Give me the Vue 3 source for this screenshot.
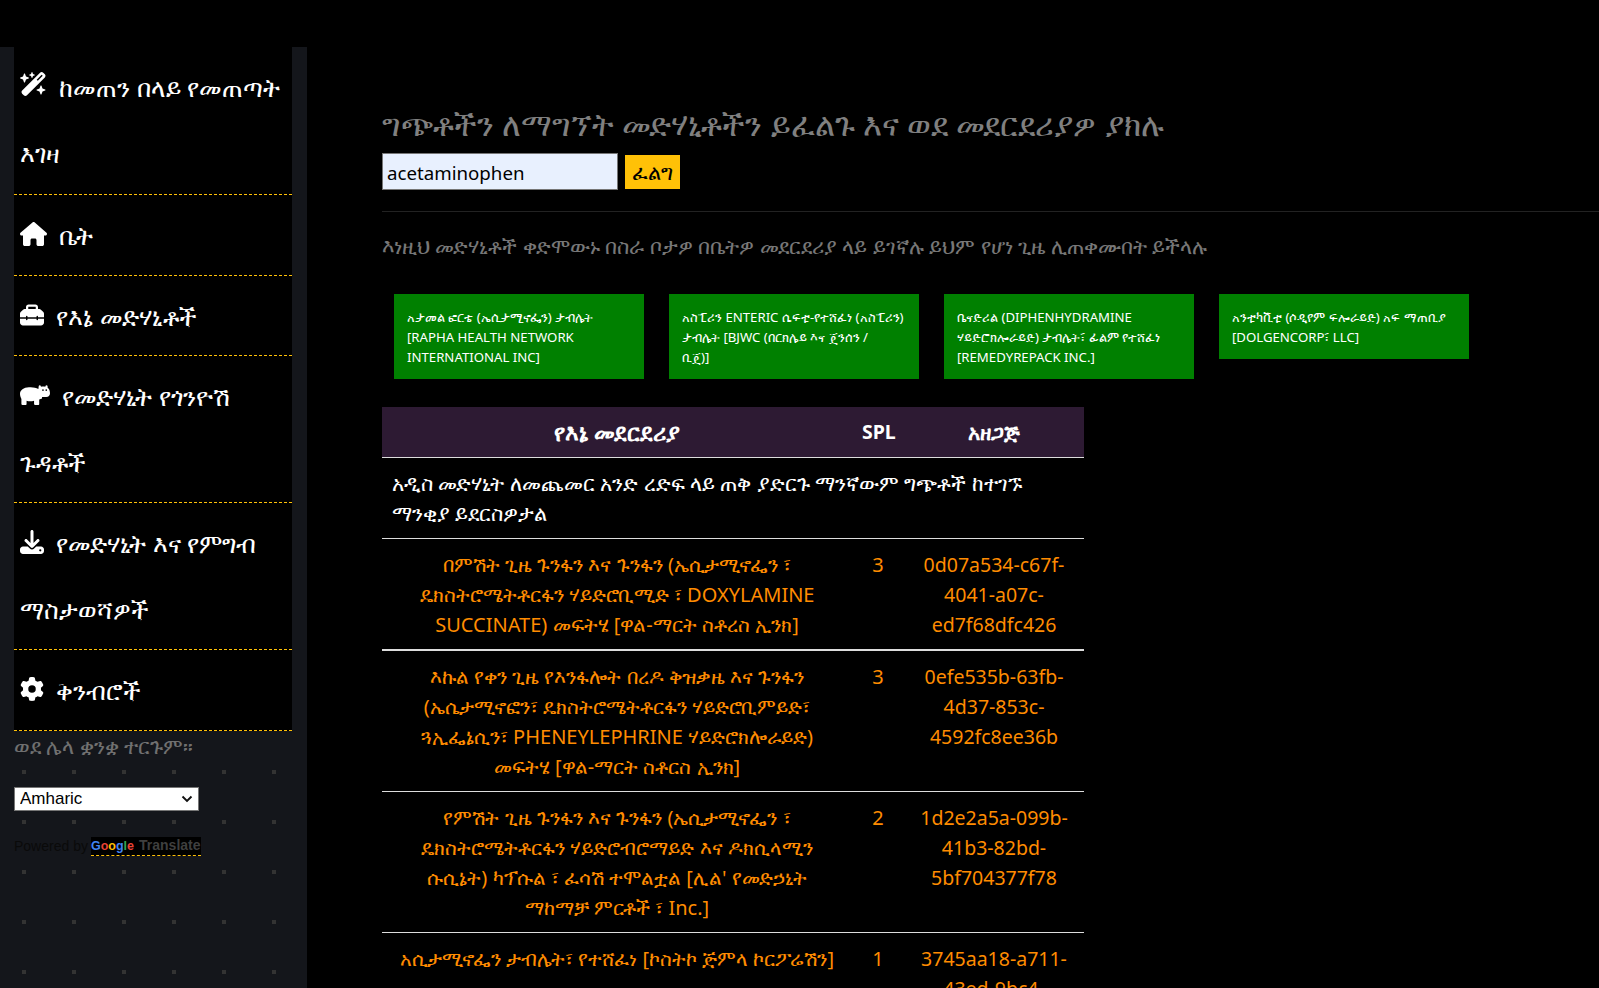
<template>
  <div class="page">
    <div class="top"></div>
    <div class="layout">
      <aside class="side">
        <nav class="nav">
          <a v-for="item in nav" :key="item.label" class="nav__item">
            <svg class="nav__icon" :style="{ width: item.w + 'px', height: item.h + 'px', verticalAlign: (item.lift || -1) + 'px' }" :viewBox="item.box" fill="#fff">
              <path fill-rule="evenodd" :d="item.d" />
            </svg>{{ item.label }}
          </a>
        </nav>
        <div class="lang">ወደ ሌላ ቋንቋ ተርጉም።</div>
        <select class="lang__select">
          <option>Amharic</option>
        </select>
        <div class="powered">
          Powered by
          <span class="gt"><span class="gt__logo"><span class="g1">G</span><span class="g2">o</span><span class="g3">o</span><span class="g1">g</span><span class="g4">l</span><span class="g2">e</span></span><span class="gt__word">Translate</span></span>
        </div>
      </aside>
      <main class="main">
        <h2 class="main__title">ግጭቶችን ለማግኘት መድሃኒቶችን ይፈልጉ እና ወደ መደርደሪያዎ ያክሉ</h2>
        <div class="search">
          <input class="search__input" value="acetaminophen" />
          <button class="search__btn">ፈልግ</button>
        </div>
        <hr class="rule" />
        <p class="lead">እነዚህ መድሃኒቶች ቀድሞውኑ በስራ ቦታዎ በቤትዎ መደርደሪያ ላይ ይገኛሉ ይህም የሆነ ጊዜ ሊጠቀሙበት ይችላሉ</p>
        <div class="cards">
          <div v-for="c in cards" :key="c" class="card">{{ c }}</div>
        </div>
        <table class="shelf">
          <colgroup>
            <col style="width: 470px" />
            <col style="width: 52px" />
            <col style="width: 180px" />
          </colgroup>
          <thead>
            <tr>
              <th class="shelf__name">የእኔ መደርደሪያ</th>
              <th class="shelf__spl">SPL</th>
              <th class="shelf__maker">አዘጋጅ</th>
            </tr>
          </thead>
          <tbody>
            <tr>
              <td class="shelf__note" colspan="3">አዲስ መድሃኒት ለመጨመር አንድ ረድፍ ላይ ጠቅ ያድርጉ ማንኛውም ግጭቶች ከተገኙ ማንቂያ ይደርስዎታል</td>
            </tr>
            <tr v-for="r in rows" :key="r.id">
              <td class="shelf__drug">{{ r.name }}</td>
              <td>{{ r.spl }}</td>
              <td class="shelf__id">{{ r.id }}</td>
            </tr>
          </tbody>
        </table>
      </main>
    </div>
  </div>
</template>

<script setup>
const nav = [
  {
    label: "ከመጠን በላይ የመጠጣት እገዛ",
    w: 27, h: 24, box: "0 0 576 512", lift: 1,
    d: "M234.7 42.7L197 56.8c-3 1.1-5 4-5 7.2s2 6.1 5 7.2l37.7 14.1L248.8 123c1.1 3 4 5 7.2 5s6.1-2 7.2-5l14.1-37.7L315 71.2c3-1.1 5-4 5-7.2s-2-6.1-5-7.2L277.3 42.7 263.2 5c-1.1-3-4-5-7.2-5s-6.1 2-7.2 5L234.7 42.7zM46.1 395.4c-18.7 18.7-18.7 49.1 0 67.9l34.6 34.6c18.7 18.7 49.1 18.7 67.9 0L529.9 116.5c18.7-18.7 18.7-49.1 0-67.9L495.3 14.1c-18.7-18.7-49.1-18.7-67.9 0L46.1 395.4zM484.6 82.6l-105 105-23.3-23.3 105-105 23.3 23.3zM7.5 117.2C3 118.9 0 123.2 0 128s3 9.1 7.5 10.8L64 160l21.2 56.5c1.7 4.5 6 7.5 10.8 7.5s9.1-3 10.8-7.5L128 160l56.5-21.2c4.5-1.7 7.5-6 7.5-10.8s-3-9.1-7.5-10.8L128 96 106.8 39.5C105.1 35 100.8 32 96 32s-9.1 3-10.8 7.5L64 96 7.5 117.2zm352 256c-4.5 1.7-7.5 6-7.5 10.8s3 9.1 7.5 10.8L416 416l21.2 56.5c1.7 4.5 6 7.5 10.8 7.5s9.1-3 10.8-7.5L480 416l56.5-21.2c4.5-1.7 7.5-6 7.5-10.8s-3-9.1-7.5-10.8L480 352l-21.2-56.5c-1.7-4.5-6-7.5-10.8-7.5s-9.1 3-10.8 7.5L416 352l-56.5 21.2z",
  },
  {
    label: "ቤት",
    w: 27, h: 24, box: "0 0 576 512",
    d: "M575.8 255.5c0 18-15 32.1-32 32.1h-32l.7 160.2c0 2.7-.2 5.4-.5 8.1V472c0 22.1-17.9 40-40 40H456c-1.1 0-2.2 0-3.3-.1c-1.4 .1-2.8 .1-4.2 .1H416 392c-22.1 0-40-17.9-40-40V448 384c0-17.7-14.3-32-32-32H256c-17.7 0-32 14.3-32 32v64 24c0 22.1-17.9 40-40 40H160 128.1c-1.5 0-3-.1-4.5-.2c-1.2 .1-2.4 .2-3.6 .2H104c-22.1 0-40-17.9-40-40V360c0-.9 0-1.9 .1-2.8V287.6H32c-18 0-32-14-32-32.1c0-9 3-17 10-24L266.4 8c7-7 15-8 22-8s15 2 21 7L564.8 231.5c8 7 12 15 11 24z",
  },
  {
    label: "የእኔ መድሃኒቶች",
    w: 24, h: 24, box: "0 0 512 512",
    d: "M176 88v40h160V88c0-4.4-3.6-8-8-8H184c-4.4 0-8 3.6-8 8zm-48 40V88c0-30.9 25.1-56 56-56h144c30.9 0 56 25.1 56 56v40h28.1c12.7 0 24.9 5.1 33.9 14.1l51.9 51.9c9 9 14.1 21.2 14.1 33.9V304H384v-16c0-8.8-7.2-16-16-16s-16 7.2-16 16v16H160v-16c0-8.8-7.2-16-16-16s-16 7.2-16 16v16H0v-76.1c0-12.7 5.1-24.9 14.1-33.9l51.9-51.9c9-9 21.2-14.1 33.9-14.1H128zM0 416v-80h128v16c0 8.8 7.2 16 16 16s16-7.2 16-16v-16h192v16c0 8.8 7.2 16 16 16s16-7.2 16-16v-16h128v80c0 35.3-28.7 64-64 64H64c-35.3 0-64-28.7-64-64z",
  },
  {
    label: "የመድሃኒት የጎንዮሽ ጉዳቶች",
    w: 30, h: 24, box: "0 0 640 512",
    d: "M190 90C280 84 340 100 392 128L400 64C402 40 440 40 444 64L446 78C480 70 510 70 540 80L544 62C548 40 584 40 588 64L590 100C625 125 640 170 640 220C640 270 610 300 560 300L470 300L470 330C450 340 430 344 410 350L410 450C410 465 400 470 390 470L320 470C310 470 300 462 300 450L300 380C240 395 190 395 140 380L140 450C140 465 130 470 120 470L50 470C40 470 30 462 30 450L30 340C10 300 0 270 0 230C0 150 80 96 190 90ZM472 150a18 18 0 1 0 36 0a18 18 0 1 0-36 0zM542 150a18 18 0 1 0 36 0a18 18 0 1 0-36 0z",
  },
  {
    label: "የመድሃኒት እና የምግብ ማስታወሻዎች",
    w: 24, h: 24, box: "0 0 512 512",
    d: "M288 32c0-17.7-14.3-32-32-32s-32 14.3-32 32V274.7l-73.4-73.4c-12.5-12.5-32.8-12.5-45.3 0s-12.5 32.8 0 45.3l128 128c12.5 12.5 32.8 12.5 45.3 0l128-128c12.5-12.5 12.5-32.8 0-45.3s-32.8-12.5-45.3 0L288 274.7V32zM64 352c-35.3 0-64 28.7-64 64v32c0 35.3 28.7 64 64 64H448c35.3 0 64-28.7 64-64V416c0-35.3-28.7-64-64-64H346.5l-45.3 45.3c-25 25-65.5 25-90.5 0L165.5 352H64zm368 56a24 24 0 1 1 0 48 24 24 0 1 1 0-48z",
  },
  {
    label: "ቅንብሮች",
    w: 24, h: 24, box: "0 0 512 512",
    d: "M495.9 166.6c3.2 8.7 .5 18.4-6.4 24.6l-43.3 39.4c1.1 8.3 1.7 16.8 1.7 25.4s-.6 17.1-1.7 25.4l43.3 39.4c6.9 6.2 9.6 15.9 6.4 24.6c-4.4 11.9-9.7 23.3-15.8 34.3l-4.7 8.1c-6.6 11-14 21.4-22.1 31.2c-5.9 7.2-15.7 9.6-24.5 6.8l-55.7-17.7c-13.4 10.3-28.2 18.9-44 25.4l-12.5 57.1c-2 9.1-9 16.3-18.2 17.8c-13.8 2.3-28 3.5-42.5 3.5s-28.7-1.2-42.5-3.5c-9.2-1.5-16.2-8.7-18.2-17.8l-12.5-57.1c-15.8-6.5-30.6-15.1-44-25.4L83.1 425.9c-8.8 2.8-18.6 .3-24.5-6.8c-8.1-9.8-15.5-20.2-22.1-31.2l-4.7-8.1c-6.1-11-11.4-22.4-15.8-34.3c-3.2-8.7-.5-18.4 6.4-24.6l43.3-39.4C64.6 273.1 64 264.6 64 256s.6-17.1 1.7-25.4L22.4 191.2c-6.9-6.2-9.6-15.9-6.4-24.6c4.4-11.9 9.7-23.3 15.8-34.3l4.7-8.1c6.6-11 14-21.4 22.1-31.2c5.9-7.2 15.7-9.6 24.5-6.8l55.7 17.7c13.4-10.3 28.2-18.9 44-25.4l12.5-57.1c2-9.1 9-16.3 18.2-17.8C227.3 1.2 241.5 0 256 0s28.7 1.2 42.5 3.5c9.2 1.5 16.2 8.7 18.2 17.8l12.5 57.1c15.8 6.5 30.6 15.1 44 25.4l55.7-17.7c8.8-2.8 18.6-.3 24.5 6.8c8.1 9.8 15.5 20.2 22.1 31.2l4.7 8.1c6.1 11 11.4 22.4 15.8 34.3zM256 336a80 80 0 1 0 0-160 80 80 0 1 0 0 160z",
  },
];

const cards = [
  "አታመል ፎርቴ (ኤሲታሚኖፌን) ታብሌት [RAPHA HEALTH NETWORK INTERNATIONAL INC]",
  "አስፒሪን ENTERIC ሴፍቲ-የተሸፈነ (አስፒሪን) ታብሌት [BJWC (በርክሌይ እና ጄንሰን /\nቢጄ)]",
  "ቤናድሪል (DIPHENHYDRAMINE ሃይድሮክሎራይድ) ታብሌት፣ ፊልም የተሸፈነ [REMEDYREPACK INC.]",
  "አንቲካቪቲ (ሶዲየም ፍሎራይድ) አፍ ማጠቢያ [DOLGENCORP፣ LLC]",
];

const rows = [
  {
    name: "በምሽት ጊዜ ጉንፋን እና ጉንፋን (ኤሲታሚኖፌን ፣ ዴክስትሮሜትቶርፋን ሃይድሮቢሚድ ፣ DOXYLAMINE SUCCINATE) መፍትሄ [ዋል-ማርት ስቶረስ ኢንክ]",
    spl: 3,
    id: "0d07a534-c67f-4041-a07c-ed7f68dfc426",
  },
  {
    name: "እኩል የቀን ጊዜ የእንፋሎት በረዶ ቅዝቃዜ እና ጉንፋን (ኤሴታሚኖፎን፣ ዴክስትሮሜትቶርፋን ሃይድሮቢምይድ፣ ጓኢፌኔሲን፣ PHENEYLEPHRINE ሃይድሮክሎራይድ) መፍትሄ [ዋል-ማርት ስቶርስ ኢንክ]",
    spl: 3,
    id: "0efe535b-63fb-4d37-853c-4592fc8ee36b",
  },
  {
    name: "የምሽት ጊዜ ጉንፋን እና ጉንፋን (ኤሲታሚኖፌን ፣ ዴክስትሮሜትቶርፋን ሃይድሮብሮማይድ እና ዶክሲላሚን ሱሲኔት) ካፕሱል ፣ ፈሳሽ ተሞልቷል [ሊል' የመድኃኒት ማከማቻ ምርቶች ፣ Inc.]",
    spl: 2,
    id: "1d2e2a5a-099b-41b3-82bd-5bf704377f78",
  },
  {
    name: "አሲታሚኖፌን ታብሌት፣ የተሸፈነ [ኮስትኮ ጅምላ ኮርፖሬሽን]",
    spl: 1,
    id: "3745aa18-a711-43ed-9bc4-7a1e0c52d6f3",
  },
];
</script>

<style>
html,
body {
  background: #000;
  height: 100%;
  overflow: hidden;
}
</style>

<style scoped>
.page {
  background: #000;
  color: #fff;
  font-family: "Noto Sans", "Open Sans", "DejaVu Sans", sans-serif;
  height: 100vh;
  overflow: hidden;
}

.top {
  height: 47px;
}

.layout {
  display: flex;
  height: 941px;
}

.side {
  background-color: #14161b;
  background-image: conic-gradient(from 270deg at 4px 4px, #333 25%, transparent 0);
  background-position: 22px 23px;
  background-size: 50px 50px;
  box-sizing: border-box;
  flex: 0 0 307px;
  padding: 0 15px 0 14px;
}

.nav {
  background: #000;
}

.nav__item {
  border-bottom: 1px dashed #ffc107;
  display: block;
  font-size: 25px;
  line-height: 66px;
  padding: 7px 6px 6.83px;
}

.nav__item:first-child {
  padding-bottom: 7.83px;
}

.nav__icon {
  margin-right: 12px;
}

.lang {
  color: #707070;
  font-size: 21px;
  line-height: 24px;
  margin-top: 3px;
}

.lang__select {
  appearance: none;
  background-color: #fff;
  background-image: url("data:image/svg+xml,%3Csvg xmlns='http://www.w3.org/2000/svg' viewBox='0 0 12 8'%3E%3Cpath d='M1.5 1.5 6 6l4.5-4.5' fill='none' stroke='%23111' stroke-width='1.9'/%3E%3C/svg%3E");
  background-position: right 5px center;
  background-repeat: no-repeat;
  background-size: 12px 8px;
  border: 1px solid #767676;
  border-radius: 0;
  box-sizing: border-box;
  color: #000;
  display: block;
  font-family: "Liberation Sans", sans-serif;
  font-size: 17px;
  height: 24px;
  margin-top: 29px;
  padding: 0 0 0 5px;
  width: 185px;
}

.powered {
  align-items: center;
  color: #0a0a0a;
  display: flex;
  font-family: "Liberation Sans", sans-serif;
  font-size: 14px;
  gap: 3px;
  margin-top: 26px;
}

.gt {
  background: #000;
  border-bottom: 1px dashed #ffc107;
  font-weight: 700;
  line-height: 17px;
}

.gt__logo {
  font-size: 12.5px;
}

.g1 { color: #4285f4; }
.g2 { color: #ea4335; }
.g3 { color: #fbbc05; }
.g4 { color: #34a853; }

.gt__word {
  color: #3f3f3f;
  font-size: 14px;
  margin-left: 5px;
}

.main {
  flex: 1;
  min-width: 0;
  padding-left: 75px;
}

.main__title {
  color: #808080;
  font-size: 31.7px;
  font-weight: 400;
  line-height: 36px;
  margin: 59px 0 0;
}

.search {
  align-items: center;
  display: flex;
  gap: 7px;
  margin-top: 11px;
}

.search__input {
  background: #e8f0fe;
  border: 1px solid #767676;
  box-sizing: border-box;
  color: #000;
  font-family: inherit;
  font-size: 18.7px;
  height: 37px;
  padding: 2px 4px 0;
  width: 236px;
}

.search__btn {
  background: #ffc107;
  border: 0;
  color: #000;
  font-family: inherit;
  font-size: 21px;
  height: 34px;
  padding: 0;
  width: 55px;
}

.rule {
  border: 0;
  border-top: 1px solid #222;
  margin: 21px 0 0;
}

.lead {
  color: #777;
  font-size: 21.1px;
  line-height: 28px;
  margin: 20px 0 0;
}

.cards {
  align-items: flex-start;
  display: flex;
  gap: 25px;
  margin-top: 34px;
  padding-left: 12px;
}

.card {
  background: #008000;
  box-sizing: border-box;
  flex: 0 0 250px;
  font-size: 13.2px;
  line-height: 20px;
  padding: 12.5px 8px 12.5px 13px;
  white-space: pre-line;
}

.shelf {
  border-collapse: collapse;
  font-size: 20px;
  line-height: 30px;
  margin-top: 28px;
  table-layout: fixed;
  width: 702px;
}

.shelf th {
  background: #2d1a33;
  border-bottom: 1px solid #ddd;
  font-weight: 700;
  height: 50px;
  padding: 0 10px;
  text-align: center;
}

.shelf th.shelf__name {
  font-size: 23px;
}

.shelf th.shelf__spl {
  font-size: 19.5px;
}

.shelf th.shelf__maker {
  font-size: 21px;
}

.shelf td {
  border-bottom: 1px solid #ddd;
  color: #ff8c00;
  padding: 11px 10px 9px;
  text-align: center;
  vertical-align: top;
}

.shelf td.shelf__drug {
  padding-left: 15px;
  padding-right: 15px;
}

.shelf td.shelf__id {
  font-size: 19.5px;
}

.shelf tr:nth-child(2) td {
  border-bottom-width: 2px;
}

.shelf td.shelf__note {
  color: #fff;
  font-size: 20.7px;
  padding: 10px 50px 10px 10px;
  text-align: left;
}
</style>
